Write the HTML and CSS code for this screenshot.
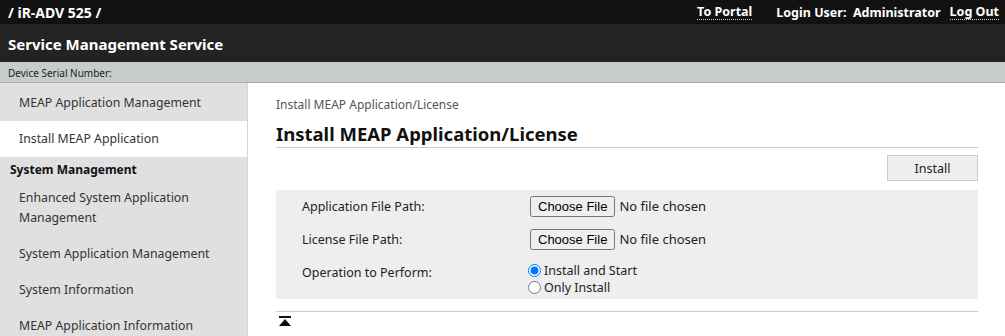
FILE: index.html
```html
<html lang="en">

<head>
    <meta charset="UTF-8">
    <title>Service Management Service</title>
    <link rel="stylesheet" href="styles.css">
</head>

<body>
    <div class="top-bar">
        <span class="device-name">/ iR-ADV 525 /</span>
        <div class="top-links">
            <a class="top-link" href="#">To Portal</a>
            <span class="login-user">Login User:&nbsp; Administrator</span>
            <a class="top-link" href="#">Log Out</a>
        </div>
    </div>
    <div class="title-bar">Service Management Service</div>
    <div class="serial-bar">Device Serial Number:</div>

    <div class="layout">
        <div class="sidebar">
            <a class="side-item" href="#">MEAP Application Management</a>
            <a class="side-item selected" href="#">Install MEAP Application</a>
            <div class="side-heading">System Management</div>
            <a class="side-item" href="#">Enhanced System Application Management</a>
            <a class="side-item" href="#">System Application Management</a>
            <a class="side-item" href="#">System Information</a>
            <a class="side-item" href="#">MEAP Application Information</a>
        </div>

        <div class="content">
            <div class="breadcrumb">Install MEAP Application/License</div>
            <h1 class="page-title">Install MEAP Application/License</h1>

            <div class="actions">
                <button class="install-button">Install</button>
            </div>

            <div class="form-box">
                <div class="form-row">
                    <div class="form-label">Application File Path:</div>
                    <div class="form-field"><input type="file"></div>
                </div>
                <div class="form-row">
                    <div class="form-label">License File Path:</div>
                    <div class="form-field"><input type="file"></div>
                </div>
                <div class="form-row op-row">
                    <div class="form-label">Operation to Perform:</div>
                    <div class="form-field radios">
                        <label><input type="radio" name="op" checked>Install and Start</label>
                        <label><input type="radio" name="op">Only Install</label>
                    </div>
                </div>
            </div>

            <div class="page-bottom">
                <a class="to-top" href="#">
                    <svg width="12" height="10" viewBox="0 0 12 10">
                        <rect x="0" y="0" width="12" height="2" fill="#111" />
                        <polygon points="6,3 12,10 0,10" fill="#111" />
                    </svg>
                </a>
            </div>
        </div>
    </div>
</body>
</html>
```

FILE: styles.css
```css
body {
    margin: 0;
    font-family: "Noto Sans", "Open Sans", sans-serif;
    color: #222;
    background-color: #fff;
}

a {
    color: inherit;
    text-decoration: none;
}

.top-bar {
    display: flex;
    justify-content: space-between;
    align-items: center;
    height: 24px;
    padding: 0 6px 0 8px;
    background-color: #111;
    color: #fff;
    font-weight: bold;
    font-size: 12.5px;
}

.device-name {
    font-size: 14px;
}

.top-links {
    display: flex;
    align-items: center;
    gap: 9px;
}

.top-link {
    border-bottom: 1px dotted #ccc;
    line-height: 15px;
}

.top-links .top-link:first-child {
    margin-right: 15px;
}

.title-bar {
    height: 38px;
    line-height: 40px;
    padding-left: 8px;
    background-color: #232323;
    color: #fff;
    font-weight: bold;
    font-size: 15px;
}

.serial-bar {
    height: 20px;
    line-height: 22px;
    padding-left: 8px;
    background-color: #c8cbcb;
    border-bottom: 1px solid #a9b0ad;
    font-size: 10px;
    color: #222;
}

.layout {
    display: flex;
}

.sidebar {
    width: 247px;
    flex-shrink: 0;
    background-color: #e0e0e0;
    border-right: 1px solid #d4d4d4;
    padding-top: 2px;
    min-height: 260px;
}

.side-item {
    display: block;
    padding: 8px 10px 8px 19px;
    font-size: 12.3px;
    line-height: 20px;
    color: #333;
}

.side-item.selected {
    background-color: #fff;
}

.side-heading {
    padding: 3px 10px 0 10px;
    height: 20px;
    line-height: 20px;
    font-size: 12px;
    font-weight: bold;
    color: #111;
}

.content {
    flex: 1;
    padding: 13px 27px 0 28px;
}

.breadcrumb {
    font-size: 12px;
    color: #555;
    line-height: 18px;
}

.page-title {
    margin: 8px 0 0 0;
    font-size: 18.5px;
    line-height: 24px;
    padding-bottom: 1px;
    border-bottom: 1px solid #ccc;
    color: #111;
}

.actions {
    display: flex;
    justify-content: flex-end;
    padding: 7px 0 9px 0;
}

.install-button {
    width: 91px;
    height: 26px;
    font-family: inherit;
    font-size: 12.5px;
    color: #222;
    background-color: #eee;
    border: 1px solid #ccc;
    cursor: pointer;
}

.form-box {
    background-color: #eee;
    padding: 0 0 3px 26px;
}

.form-row {
    display: flex;
    align-items: center;
    height: 33px;
}

.form-row.op-row {
    align-items: flex-start;
    height: auto;
    padding-top: 6px;
}

.form-label {
    width: 228px;
    font-size: 12.5px;
    line-height: 17px;
    color: #222;
}

.op-row .form-label {
    padding-top: 2px;
}

.form-field input[type="file"] {
    font-family: "Noto Sans", sans-serif;
    font-size: 13px;
}

.radios {
    display: flex;
    flex-direction: column;
    font-size: 12.5px;
}

.radios label {
    display: flex;
    align-items: center;
    height: 17px;
}

.radios input {
    margin: 0 3px 0 -2px;
    width: 13px;
    height: 13px;
}

.page-bottom {
    margin-top: 12px;
    border-top: 1px solid #ccc;
    padding: 4px 0 0 3px;
}

.to-top {
    display: inline-block;
}
```
